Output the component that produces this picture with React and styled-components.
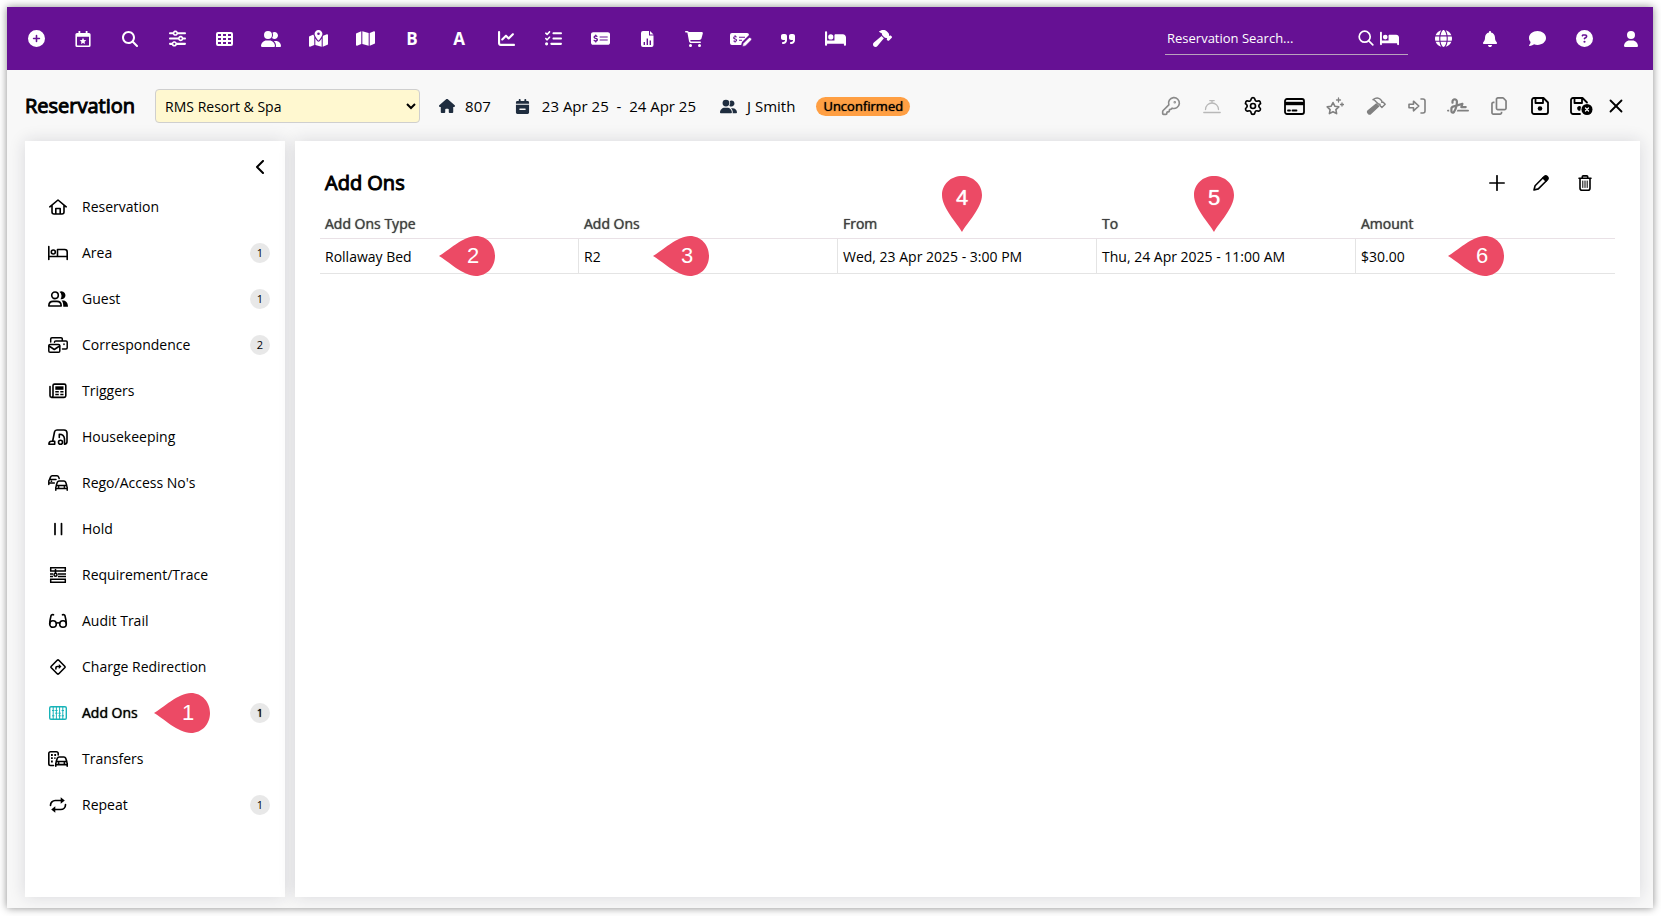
import React, { useState } from 'react'
import styled, { createGlobalStyle, css } from 'styled-components'
import {
  FaBed,
  FaBell,
  FaCalendarMinus,
  FaCartShopping,
  FaChartLine,
  FaCirclePlus,
  FaCircleQuestion,
  FaComment,
  FaGlobe,
  FaHammer,
  FaHouse,
  FaListCheck,
  FaMagnifyingGlass,
  FaMap,
  FaMapLocationDot,
  FaMoneyCheckDollar,
  FaQuoteRight,
  FaRegCopy,
  FaSignature,
  FaSliders,
  FaUser,
  FaUserGroup,
} from 'react-icons/fa6'
import { KeyRound, Settings, X } from 'lucide-react'


const GlobalStyle = createGlobalStyle`
  * {
    box-sizing: border-box;
  }
  body {
    margin: 0;
    background: #ffffff;
    color: #000000;
    font-family: "Open Sans", "Noto Sans", sans-serif;
    font-size: 14px;
    line-height: 20px;
  }
  button, input, select {
    font: inherit;
    color: inherit;
  }
`;


/* regular weight, thickened a little */
const strong = css`
  font-weight: 400;
  text-shadow: 0 0 1px currentColor;
`;


/* ---------- frame ---------- */

const Page = styled.div`
  min-height: 100vh;
  padding: 7px 8px 8px 7px;
  display: flex;
`;

const Frame = styled.div`
  flex: 1;
  min-width: 0;
  display: flex;
  flex-direction: column;
  background: #f8f8f8;
  box-shadow: 0 0 8px rgba(0, 0, 0, 0.45);
`;


/* ---------- top bar ---------- */

const TopBar = styled.header`
  height: 63px;
  padding: 0 12px 0 19px;
  display: flex;
  align-items: center;
  justify-content: space-between;
  background: #661194;
  color: #ffffff;
`;

const IconList = styled.nav`
  display: flex;
  align-items: center;
  gap: 27px;
`;

const IconButton = styled.button`
  width: 20px;
  height: 20px;
  padding: 0;
  border: 0;
  background: none;
  display: flex;
  align-items: center;
  justify-content: center;
  cursor: pointer;
  color: ${({ $color }) => $color || 'inherit'};
  svg {
    flex: none;
  }
`;

const Letter = styled.span`
  font-size: 17px;
  font-weight: 700;
`;

const TopRight = styled.div`
  display: flex;
  align-items: center;
  gap: 25px;
`;

const SearchBox = styled.form`
  width: 243px;
  height: 32px;
  padding: 0 9px 0 2px;
  display: flex;
  align-items: center;
  gap: 6px;
  border-bottom: 1px solid #b9a3bd;
`;

const SearchInput = styled.input`
  flex: 1;
  min-width: 0;
  padding: 0;
  border: 0;
  outline: 0;
  background: none;
  font-size: 13px;
  &::placeholder {
    color: #ffffff;
    opacity: 1;
  }
`;


/* ---------- reservation header ---------- */

const Heading = styled.div`
  height: 71px;
  padding: 1px 31px 0 18px;
  display: flex;
  align-items: center;
  justify-content: space-between;
`;

const Summary = styled.div`
  display: flex;
  align-items: center;
`;

const Title = styled.h1`
  margin: 0 20px 0 0;
  font-size: 20px;
  font-weight: 400;
  -webkit-text-stroke: 1px currentColor;
`;

const PropertySelect = styled.select`
  width: 265px;
  height: 34px;
  margin-right: 19px;
  padding: 0 0 0 5px;
  border: 1px solid #cfcfcf;
  border-radius: 4px;
  background: #fff8d0;
`;

const Fact = styled.span`
  display: flex;
  align-items: center;
  gap: ${({ $gap }) => $gap || 10}px;
  margin-right: ${({ $after }) => $after || 24}px;
  font-size: 15px;
  white-space: pre;
  svg {
    color: #1f2d3f;
  }
`;

const Status = styled.span`
  ${strong}
  height: 19px;
  padding: 0 7px;
  border-radius: 10px;
  background: #ff9f43;
  font-size: 13px;
  line-height: 18px;
`;

const Tools = styled.div`
  display: flex;
  align-items: center;
  gap: 17px;
`;

const ToolButton = styled(IconButton)`
  width: 24px;
  &:last-child {
    width: 12px;
  }
`;


/* ---------- panels ---------- */

const Content = styled.div`
  flex: 1;
  display: flex;
  gap: 10px;
  padding: 0 13px 11px 18px;
`;

const panel = css`
  background: #ffffff;
  box-shadow: 0 0 16px rgba(30, 30, 50, 0.14);
`;

const Sidebar = styled.aside`
  ${panel}
  width: 260px;
  flex: none;
  padding: 16px 15px 16px 23px;
`;

const Collapse = styled(IconButton)`
  margin-left: auto;
`;

const Menu = styled.ul`
  list-style: none;
  margin: 7px 0 0;
  padding: 0;
`;

const MenuItem = styled.li`
  position: relative;
`;

const MenuLink = styled.a`
  height: 46px;
  display: flex;
  align-items: center;
  gap: 14px;
  color: #000000;
  text-decoration: none;
  ${({ $active }) => $active && strong}
  svg {
    flex: none;
    color: ${({ $active }) => ($active ? '#17b3b8' : '#000000')};
  }
`;

const Count = styled.span`
  width: 20px;
  height: 20px;
  margin-left: auto;
  border-radius: 50%;
  background: #e8e8e8;
  font-size: 11px;
  text-align: center;
`;

const Main = styled.main`
  ${panel}
  flex: 1;
  min-width: 0;
  padding: 32px 25px;
`;

const MainHead = styled.div`
  height: 20px;
  padding: 0 20px 0 5px;
  display: flex;
  align-items: center;
  justify-content: space-between;
`;

const SubTitle = styled(Title).attrs({ as: 'h2' })`
  margin: 0;
`;

const Actions = styled.div`
  display: flex;
  gap: 24px;
`;

const Table = styled.table`
  width: 100%;
  margin-top: 17px;
  border-collapse: separate;
  border-spacing: 0;
  table-layout: fixed;
`;

const HeadCell = styled.th`
  ${strong}
  position: relative;
  height: 29px;
  padding: 0 5px;
  border-bottom: 1px solid #e9e1e6;
  color: #404040;
  text-align: left;
`;

const Cell = styled.td`
  position: relative;
  height: 35px;
  padding: 1px 5px 0;
  border-bottom: 1px solid #e4e4e4;
  &:not(:last-child) {
    border-right: 1px solid #e4e4e4;
  }
`;


/* ---------- numbered callouts, laid over the page ---------- */

const Pin = styled.span`
  position: absolute;
  z-index: 1;
  left: ${({ $left }) => $left}px;
  display: flex;
  align-items: center;
  justify-content: center;
  color: #ffffff;
  font: 400 22px/40px "Liberation Sans", Arial, sans-serif;
  ${({ $down }) =>
    $down
      ? css`
          width: 40px;
          height: 56px;
          bottom: 6px;
          padding-bottom: 12px;
        `
      : css`
          width: 56px;
          height: 40px;
          top: calc(50% - 20px);
          padding-left: 12px;
        `}
  svg {
    position: absolute;
    inset: 0;
    z-index: -1;
    color: #ec4a65;
  }
`;

const Callout = ({ n, left, down }) => (
  <Pin $left={left} $down={down}>
    {down ? (
      <svg width="40" height="56" viewBox="0 0 40 56">
        <path fill="currentColor" d="M20 56C15 47 0 32 0 19C0 8 9 0 20 0S40 8 40 19C40 32 25 47 20 56Z" />
      </svg>
    ) : (
      <svg width="56" height="40" viewBox="0 0 56 40">
        <path fill="currentColor" d="M0 20C9 15 24 0 37 0C48 0 56 9 56 20S48 40 37 40C24 40 9 25 0 20Z" />
      </svg>
    )}
    {n}
  </Pin>
)


/* ---------- drawings ---------- */

const Line = ({ w = 20, h = 16, sw = 1.5, children }) => (
  <svg
    width={w}
    height={h}
    viewBox={`0 0 ${w} ${h}`}
    fill="none"
    stroke="currentColor"
    strokeWidth={sw}
    strokeLinecap="round"
    strokeLinejoin="round"
    aria-hidden="true"
  >
    {children}
  </svg>
)

const Solid = ({ w = 20, h = 16, children }) => (
  <svg width={w} height={h} viewBox={`0 0 ${w} ${h}`} fill="currentColor" fillRule="evenodd" aria-hidden="true">
    {children}
  </svg>
)

const CalendarStar = () => (
  <Solid w={16}>
    <path d="M3.5 0h1.8v2h5.4V0h1.8v2H14a1.6 1.6 0 0 1 1.6 1.6v10.8A1.6 1.6 0 0 1 14 16H2a1.6 1.6 0 0 1-1.6-1.6V3.6A1.6 1.6 0 0 1 2 2h1.5zM2 5.8V14c0 .3.2.5.5.5h11c.3 0 .5-.2.5-.5V5.8zM8 6.8l1 2.1 2.3.3-1.7 1.6.4 2.3L8 12l-2 1.1.4-2.3-1.7-1.6 2.3-.3z" />
  </Solid>
)

const Grid = () => (
  <Solid w={17} h={14}>
    <path d="M2 0h13a2 2 0 0 1 2 2v10a2 2 0 0 1-2 2H2a2 2 0 0 1-2-2V2a2 2 0 0 1 2-2zM2 2v2h3V2zm5 0v2h3V2zm5 0v2h3V2zM2 6v2h3V6zm5 0v2h3V6zm5 0v2h3V6zM2 10v2h3v-2zm5 0v2h3v-2zm5 0v2h3v-2z" />
  </Solid>
)

const FileChart = () => (
  <Solid w={13}>
    <path d="M2 0h6v4.5h4.5V14a2 2 0 0 1-2 2H2a2 2 0 0 1-2-2V2a2 2 0 0 1 2-2zM2.6 11v3H4v-3zm3-3.5V14H7V7.5zm3 2V14H10V9.5z" />
    <path d="M9 0l3.5 3.5H9z" />
  </Solid>
)

const MoneyPen = () => (
  <svg width="22" height="16" viewBox="0 0 22 16" aria-hidden="true">
    <path fill="currentColor" d="M2 2h15a2 2 0 0 1 2 2l-7 7-.8 3H2a2 2 0 0 1-2-2V4a2 2 0 0 1 2-2z" />
    <path
      fill="none"
      stroke="#661194"
      strokeWidth="1.1"
      d="M9 6.2h6M9 9.2h3M6.6 6.1C5.5 5.3 3.6 5.6 3.7 6.9s2.9.8 2.9 2.2-2 1.5-3 .7M5.1 4.3v1.2M5.1 10.3v1.2"
    />
    <path fill="currentColor" stroke="#661194" strokeWidth=".6" d="M12.5 15.5l.6-3 5.6-5.6a1.4 1.4 0 0 1 2 0l.4.4a1.4 1.4 0 0 1 0 2L15.5 14.9z" />
  </svg>
)

const SearchThin = () => (
  <Line w={16} sw={1.7}>
    <circle cx="6.7" cy="6.7" r="5.5" />
    <path d="M10.8 10.8l4 4" />
  </Line>
)

const Cloche = () => (
  <Line w={18} sw={1.3}>
    <path d="M.8 14.5h16.4M2.5 11.5a6.5 6.5 0 0 1 13 0M9 5V2.6M6.8 2.6h4.4" />
  </Line>
)

const Card = () => (
  <Line w={21} h={17} sw={1.8}>
    <rect x="1" y="1" width="19" height="15" rx="2" />
    <path d="M1 5.5h19" strokeWidth="3.4" strokeLinecap="butt" />
    <path d="M4 12.5h2M8.5 12.5h4" />
  </Line>
)

const Stars = () => (
  <Line w={18} h={18} sw={1.6}>
    <path d="M7 5.5l1.8 3.7 4 .6-2.9 2.8.7 4L7 14.7l-3.6 1.9.7-4L1.2 9.8l4-.6z" />
    <path d="M12.5 1v4M10.5 3h4M16 6v3M14.5 7.5h3" strokeWidth="1.3" />
  </Line>
)

const HammerLine = () => (
  <Line w={20} h={18} sw={1.4}>
    <path d="M7 2.6C9.5.8 12.5.6 14.3 2.3l1.5 1.6v1.5l1.4-.2 2 2-3.3 3.2-2-1.9.1-1.4h-1.5L9.8 4.5C9.2 3.6 8.2 2.9 7 2.6z" />
    <path d="M10.3 7l2.3 2.3-7.8 7.2a1.7 1.7 0 0 1-2.4 0l-.3-.4a1.7 1.7 0 0 1 0-2.3z" fill="currentColor" />
  </Line>
)

const SignIn = () => (
  <Line w={18} sw={1.6}>
    <path d="M1 6.3h4.5V3.2L10.8 8l-5.3 4.8V9.7H1zM13 1h2a2 2 0 0 1 2 2v10a2 2 0 0 1-2 2h-2" />
  </Line>
)

const Save = () => (
  <Line w={18} h={18} sw={1.8}>
    <path d="M3 1h9.5L17 5.5V15a2 2 0 0 1-2 2H3a2 2 0 0 1-2-2V3a2 2 0 0 1 2-2zM4.5 1.5V6H12V1.5" />
    <circle cx="9" cy="11.5" r="2.3" fill="currentColor" stroke="none" />
  </Line>
)

const SaveClose = () => (
  <Line w={23} h={18} sw={1.8}>
    <path d="M10 17H3a2 2 0 0 1-2-2V3a2 2 0 0 1 2-2h9.500L17 5.500M4.500 1.500V6H12V1.500" />
    <path d="M11 9.7a2.3 2.3 0 1 0-.7 3.8z" fill="currentColor" stroke="none" />
    <circle cx="17" cy="12.5" r="5.5" fill="currentColor" stroke="none" />
    <path d="M15.5 11l3 3M18.5 11l-3 3" stroke="#ffffff" strokeWidth="1.3" />
  </Line>
)

const ChevronLeft = () => (
  <Line w={10} h={14} sw={2}>
    <path d="M8 1L2 7l6 6" />
  </Line>
)

const Plus = () => (
  <Line w={16} sw={1.7}>
    <path d="M8 .8v14.4M.8 8h14.4" />
  </Line>
)

const Pencil = () => (
  <Line w={16} sw={1.6}>
    <path d="M1 15l1.1-4.3L10.5 2.3l3.2 3.2-8.4 8.4z" />
    <path d="M10 3l1.6-1.6a1.6 1.6 0 0 1 2.3 0l.7.7a1.6 1.6 0 0 1 0 2.3L13 6z" fill="currentColor" />
  </Line>
)

const Trash = () => (
  <Line w={14} sw={1.6}>
    <path d="M1 3.3h12M4.3 3V1.8c0-.5.4-.9.9-.9h3.6c.5 0 .9.4.9.9V3M2 3.5v9.7a2 2 0 0 0 2 2h6a2 2 0 0 0 2-2V3.5" />
    <path d="M4.8 6v6.5M7 6v6.5M9.2 6v6.5" strokeWidth="1" />
  </Line>
)

const HomeLine = () => (
  <Line sw={1.6}>
    <path d="M1.8 7.8L10 1l8.2 6.8M4 6.5V13a2 2 0 0 0 2 2h8a2 2 0 0 0 2-2V6.5M7.8 14.8V9.5h4.4v5.3" />
  </Line>
)

const BedLine = () => (
  <Line sw={1.6}>
    <path d="M.8 1.5v13M.8 11.5h18.4M19.2 14.5V7a2.5 2.5 0 0 0-2.5-2.5H9.5v7" />
    <circle cx="5.3" cy="7" r="2" />
  </Line>
)

const GuestLine = () => (
  <Line sw={1.6}>
    <circle cx="7" cy="4.3" r="3.3" />
    <path d="M.8 15c0-3 2-4.6 4.3-4.6h3.8c2.3 0 4.3 1.6 4.3 4.6z" />
    <path d="M11.5.8a4 4 0 1 1 1 7.4 5.5 5.5 0 0 0-1-7.4zM13.5 9.5h1.7c2.7 0 4.8 2.3 4.8 6.3h-4.7c0-3-.4-5-1.8-6.3z" fill="currentColor" stroke="none" />
  </Line>
)

const MailLine = () => (
  <Line>
    <rect x=".8" y="7.5" width="11" height="7.7" rx="1.3" />
    <path d="M1 9l5.3 3.5L11.6 9M2.7 5V2A1.2 1.2 0 0 1 3.9.8h9.2A1.2 1.2 0 0 1 14.3 2v1.5M6.5 5.2a1.3 1.3 0 0 1 1.3-1.3H18a1.2 1.2 0 0 1 1.2 1.2v5.7A1.2 1.2 0 0 1 18 12h-3.5M16 7v.5" />
  </Line>
)

const NewsLine = () => (
  <Line sw={1.6}>
    <path d="M5 3v9.7a1.5 1.5 0 0 1-3 0V3.5M5 12.5V2.6a1.5 1.5 0 0 1 1.5-1.5h9.8a1.5 1.5 0 0 1 1.5 1.5v10a1.8 1.8 0 0 1-1.8 1.8H3.5" />
    <path d="M7.3 3.3h8.2v3.5H7.3z" fill="currentColor" stroke="none" />
    <path d="M7.3 8.8h3.5M12.3 8.8h3.2M7.3 11.5h3.5M12.3 11.5h3.2" strokeLinecap="butt" />
  </Line>
)

const VacuumLine = () => (
  <Line sw={1.6}>
    <path d="M.9 15.2c0-2 1-3 2.5-3h3.3v3zM4.7 12L6.5 3A2.5 2.5 0 0 1 9 1h7a3 3 0 0 1 3 3v8.5a2.700 2.700 0 0 1-2.500 2.700M11.300 8.500V5.200c2.700 0 4.900 1.800 5.200 4.600v5" />
    <circle cx="12.5" cy="13.2" r="2" />
  </Line>
)

const CarBody = () => (
  <path d="M8.2 10.5l1.2-3.4A1.8 1.8 0 0 1 11.1 6h4.8a1.8 1.8 0 0 1 1.7 1.1l1.2 3.4M7.8 15.2v-3a1.8 1.8 0 0 1 1.8-1.7h7.8a1.8 1.8 0 0 1 1.8 1.7v3M7.8 13.6h11.4M10.5 12.1h.3M16.2 12.1h.3" />
)

const CarsLine = () => (
  <Line sw={1.5}>
    <CarBody />
    <path d="M1.5 4.6l1.1-2.7A1.7 1.7 0 0 1 4.2.8H9a1.7 1.7 0 0 1 1.6 1.1l.6 1.6M.8 9.5V6.2a1.6 1.6 0 0 1 1.6-1.6H8M.8 8h5.5M3.3 6.3h.3" />
  </Line>
)

const HoldLine = () => (
  <Line sw={1.7}>
    <path d="M7 2.5v11M13.5 2.5v11" />
  </Line>
)

const TraceLine = () => (
  <Line sw={1.5}>
    <path
      d="M2 .8h16M2 4h16M2.7.8V4M17.3.8V4M2 7h3M10 7h8M2 9.5h3M10 9.5h8M2 12.2h16M2 15.2h16M2.7 12.2v3M17.3 12.2v3"
      strokeLinecap="butt"
    />
    <path d="M7.5 2v4" strokeLinecap="butt" />
    <circle cx="7.5" cy="7.7" r="1.5" />
  </Line>
)

const GlassesLine = () => (
  <Line sw={1.6}>
    <circle cx="5" cy="11" r="3.3" />
    <circle cx="15" cy="11" r="3.3" />
    <path d="M8.3 10.2c1-.5 2.4-.5 3.4 0M1.7 11c0-3.5.7-6 1.3-8.2a1.8 1.8 0 0 1 2.5-1M18.3 11c0-3.5-.7-6-1.3-8.2a1.8 1.8 0 0 0-2.5-1" />
  </Line>
)

const DirectionLine = () => (
  <Line sw={1.6}>
    <path d="M9.2 1.3a1.2 1.2 0 0 1 1.6 0l5.9 5.9a1.2 1.2 0 0 1 0 1.6l-5.9 5.9a1.2 1.2 0 0 1-1.6 0L3.3 8.8a1.2 1.2 0 0 1 0-1.6z" />
    <path d="M7.9 10V8.7a1.2 1.2 0 0 1 1.2-1.2H12" />
    <path d="M10.8 5l2.7 2.5-2.7 2.5z" fill="currentColor" stroke="none" />
  </Line>
)

const AddOnsLine = () => (
  <Line sw={1.4}>
    <rect x="1.7" y="1.7" width="16.6" height="12.6" rx="1.3" />
    <path d="M5.2 2v12.5M8.4 2v12.5M11.6 2v12.5M14.8 2v12.5" strokeWidth="1" />
    <path d="M4 5.5h2.4M7.2 5.5h2.4M13.6 5.5H16M7.2 8.2h2.4M4 10.8h2.4M10.4 8.2h2.4M10.4 10.8h2.4M13.6 10.8H16" strokeWidth="1" strokeLinecap="butt" />
  </Line>
)

const TransferLine = () => (
  <Line sw={1.6}>
    <CarBody />
    <path d="M5.5 14.5h-3A1.7 1.7 0 0 1 .8 12.8V2.5A1.7 1.7 0 0 1 2.5.8h6a1.7 1.7 0 0 1 1.7 1.7V4" />
    <path d="M3 4h1.8M6.3 4h1.8M3 7.2h1.8M6.3 7.2h1.2M3 10.5h1.8" strokeWidth="1.8" strokeLinecap="butt" />
  </Line>
)

const RepeatLine = () => (
  <Line sw={1.7}>
    <path d="M2.5 8.3A4.8 4.8 0 0 1 7.3 3.5h6M17.5 7.7a4.8 4.8 0 0 1-4.8 4.8h-6" />
    <path d="M12.7.3l4.1 3.2-4.1 3.2zM7.3 9.3L3.2 12.5l4.1 3.2z" fill="currentColor" stroke="none" />
  </Line>
)


/* ---------- data ---------- */

const shortcuts = [
  ['New', <FaCirclePlus size={17} />],
  ['Booking chart', <CalendarStar />],
  ['Search', <FaMagnifyingGlass size={16} />],
  ['Filters', <FaSliders size={17} />],
  ['Grid', <Grid />],
  ['Guests', <FaUserGroup size={20} />],
  ['Map location', <FaMapLocationDot size={19} />],
  ['Map', <FaMap size={19} />],
  ['Bookings', <Letter>B</Letter>],
  ['Accounts', <Letter>A</Letter>],
  ['Statistics', <FaChartLine size={17} />],
  ['Tasks', <FaListCheck size={17} />],
  ['Rates', <FaMoneyCheckDollar size={19} />],
  ['Reports', <FileChart />],
  ['Sales', <FaCartShopping size={18} />],
  ['Edit rates', <MoneyPen />],
  ['Quotes', <FaQuoteRight size={16} />],
  ['Rooms', <FaBed size={21} />],
  ['Maintenance', <FaHammer size={19} />],
]

const account = [
  ['Language', <FaGlobe size={17} />],
  ['Notifications', <FaBell size={16} />],
  ['Chat', <FaComment size={17} />],
  ['Help', <FaCircleQuestion size={17} />],
  ['Profile', <FaUser size={16} />],
]

const tools = [
  ['Key', <KeyRound size={20} />, '#8a8a8a'],
  ['Service', <Cloche />, '#b8b8b8'],
  ['Settings', <Settings size={20} />],
  ['Payment', <Card />],
  ['Favourites', <Stars />, '#808080'],
  ['Maintenance', <HammerLine />, '#808080'],
  ['Check in', <SignIn />, '#808080'],
  ['Signature', <FaSignature size={22} />, '#808080'],
  ['Copy', <FaRegCopy size={18} />, '#808080'],
  ['Save', <Save />],
  ['Save and close', <SaveClose />],
  ['Close', <X size={22} />],
]

const menu = [
  { label: 'Reservation', icon: <HomeLine /> },
  { label: 'Area', icon: <BedLine />, count: 1 },
  { label: 'Guest', icon: <GuestLine />, count: 1 },
  { label: 'Correspondence', icon: <MailLine />, count: 2 },
  { label: 'Triggers', icon: <NewsLine /> },
  { label: 'Housekeeping', icon: <VacuumLine /> },
  { label: "Rego/Access No's", icon: <CarsLine /> },
  { label: 'Hold', icon: <HoldLine /> },
  { label: 'Requirement/Trace', icon: <TraceLine /> },
  { label: 'Audit Trail', icon: <GlassesLine /> },
  { label: 'Charge Redirection', icon: <DirectionLine /> },
  { label: 'Add Ons', icon: <AddOnsLine />, count: 1, callout: 1 },
  { label: 'Transfers', icon: <TransferLine /> },
  { label: 'Repeat', icon: <RepeatLine />, count: 1 },
]


const App = () => {

  const [active, setActive] = useState('Add Ons')

  return (
    <Page>
      <GlobalStyle />
      <Frame>
        <TopBar>
          <IconList>
            {shortcuts.map(([label, icon]) => (
              <IconButton key={label} type="button" aria-label={label}>{icon}</IconButton>
            ))}
          </IconList>
          <TopRight>
            <SearchBox>
              <SearchInput type="text" aria-label="Reservation Search" placeholder="Reservation Search..." />
              <SearchThin />
              <FaBed size={19} />
            </SearchBox>
            <IconList>
              {account.map(([label, icon]) => (
                <IconButton key={label} type="button" aria-label={label}>{icon}</IconButton>
              ))}
            </IconList>
          </TopRight>
        </TopBar>

        <Heading>
          <Summary>
            <Title>Reservation</Title>
            <PropertySelect aria-label="Property">
              <option>RMS Resort &amp; Spa</option>
            </PropertySelect>
            <Fact><FaHouse size={16} />807</Fact>
            <Fact $gap={12}><FaCalendarMinus size={15} />23 Apr 25  -  24 Apr 25</Fact>
            <Fact $after={21}><FaUserGroup size={17} />J Smith</Fact>
            <Status>Unconfirmed</Status>
          </Summary>
          <Tools>
            {tools.map(([label, icon, color]) => (
              <ToolButton key={label} type="button" aria-label={label} $color={color}>{icon}</ToolButton>
            ))}
          </Tools>
        </Heading>

        <Content>
          <Sidebar>
            <Collapse type="button" aria-label="Collapse menu"><ChevronLeft /></Collapse>
            <Menu>
              {menu.map(({ label, icon, count, callout }) => (
                <MenuItem key={label}>
                  <MenuLink href="#" $active={label === active} onClick={() => setActive(label)}>
                    {icon}
                    {label}
                    {count && <Count>{count}</Count>}
                  </MenuLink>
                  {callout && <Callout n={callout} left={106} />}
                </MenuItem>
              ))}
            </Menu>
          </Sidebar>

          <Main>
            <MainHead>
              <SubTitle>Add Ons</SubTitle>
              <Actions>
                <IconButton type="button" aria-label="Add"><Plus /></IconButton>
                <IconButton type="button" aria-label="Edit"><Pencil /></IconButton>
                <IconButton type="button" aria-label="Delete"><Trash /></IconButton>
              </Actions>
            </MainHead>
            <Table>
              <thead>
                <tr>
                  <HeadCell>Add Ons Type</HeadCell>
                  <HeadCell>Add Ons</HeadCell>
                  <HeadCell>From<Callout n={4} left={104} down /></HeadCell>
                  <HeadCell>To<Callout n={5} left={97} down /></HeadCell>
                  <HeadCell>Amount</HeadCell>
                </tr>
              </thead>
              <tbody>
                <tr>
                  <Cell>Rollaway Bed<Callout n={2} left={119} /></Cell>
                  <Cell>R2<Callout n={3} left={74} /></Cell>
                  <Cell>Wed, 23 Apr 2025 - 3:00 PM</Cell>
                  <Cell>Thu, 24 Apr 2025 - 11:00 AM</Cell>
                  <Cell>$30.00<Callout n={6} left={92} /></Cell>
                </tr>
              </tbody>
            </Table>
          </Main>
        </Content>
      </Frame>
    </Page>
  )
}

export default App
